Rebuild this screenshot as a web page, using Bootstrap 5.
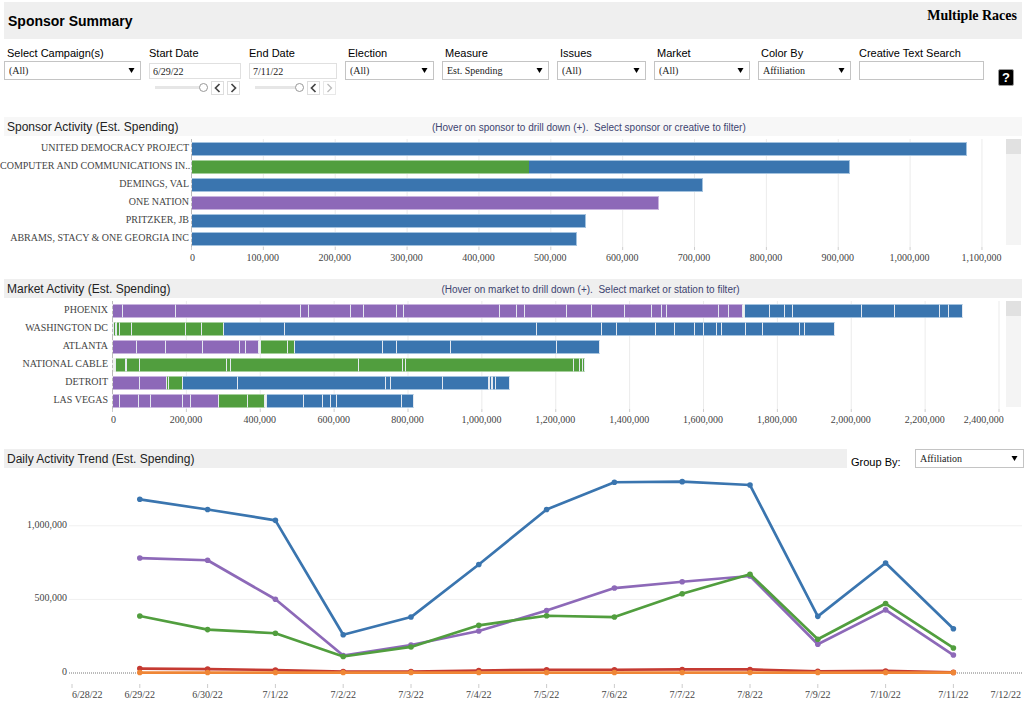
<!DOCTYPE html>
<html lang="en">
<head>
<meta charset="utf-8">
<meta name="viewport" content="width=device-width, initial-scale=1">
<title>Sponsor Summary</title>
<link href="https://cdn.jsdelivr.net/npm/bootstrap@5.3.0/dist/css/bootstrap.min.css" rel="stylesheet">
<style>
  :root { --sans: "Liberation Sans", Arial, sans-serif; --serif: "Liberation Serif", "Times New Roman", serif;
          --blue: #3a75af; --green: #519e3e; --purple: #8d69b8; }
  body { font-family: var(--sans); color: #000; background: #fff; padding: 2px 0 0 4px; overflow-x: hidden; }
  .page-head { background: #efefef; height: 37px; margin-right: 2px; padding: 0 5px 0 4px; }
  .page-head h1 { font-size: 14px; line-height: 16px; font-weight: 700; }
  .race-name { font: 700 14px/16px var(--serif); padding-top: 6px; }

  .filters { display: grid; gap: 8px; padding-top: 6px; height: 78px;
    grid-template-columns: 137fr 92fr 88fr 89fr 107fr 89fr 96fr 93fr 125fr 32px; }
  .filters > div { min-width: 0; }
  .filters label, .group-label { display: block; font-size: 11px; line-height: 16px; padding-left: 3px; white-space: nowrap; }
  .filters .flush { padding-left: 0; }
  .field { display: block; width: 100%; height: 19px; border: 1px solid #c4c4c4; border-radius: 0; background-color: #fff;
    font: 10px/15px var(--serif); color: #222; padding: 0 4px; appearance: none; }
  select.field { background-repeat: no-repeat; background-position: right 5px center; background-size: 7px 5px;
    background-image: url("data:image/svg+xml,%3Csvg xmlns='http://www.w3.org/2000/svg' viewBox='0 0 7 5'%3E%3Cpath d='M0.5 0h6L3.5 5z' fill='%23000'/%3E%3C/svg%3E"); }
  .field-date { height: 16px; margin-top: 2px; border-color: #e0e0e0; padding: 0 3px; }
  .stepper { padding: 2px 1px 0 6px; gap: 3px; }
  .stepper input { appearance: none; flex: 1 1 0; min-width: 0; height: 13px; margin: 0; background: transparent; }
  .stepper input::-webkit-slider-runnable-track { height: 3px; background: #e6e6e6; }
  .stepper input::-webkit-slider-thumb { appearance: none; width: 9px; height: 9px; margin-top: -3px; border-radius: 50%; border: 1px solid #999; background: #fff; }
  .stepper button { width: 13px; height: 14px; padding: 0; border: 1px solid #ddd; background: #fff; color: #444; line-height: 0; }
  .stepper button:disabled { color: #bbb; border-color: #e8e8e8; }
  .stepper svg { width: 9px; height: 10px; }
  .help-btn { width: 16px; height: 17px; margin: 24px 0 0 6px; padding: 0; border: 1px solid #999; border-radius: 2px; background: #000; color: #fff; font: 700 13px/15px var(--sans); }

  .section-head { height: 19px; background: #efefef; margin-right: 2px; padding-left: 3px; }
  .section-head.pale { background: #f7f7f7; }
  .section-head h2 { font-size: 12px; line-height: 21px; color: #222; flex: 20 1 0; white-space: nowrap; }
  .hint { font-size: 10px; line-height: 21px; color: #3d4470; white-space: pre; }
  .head-end { flex: 13 1 0; }
  .market-section { padding-top: 14px; }
  .trend-section { padding-top: 22px; }

  .chart { padding: 3px 3px 0 0; }
  .names { font: 10px/18px var(--serif); color: #444; text-align: right; padding-right: 4px; white-space: nowrap; }
  .names-wide { width: 191px; margin-left: -4px; padding-right: 2px; }
  .names-narrow { width: 108px; }
  .plot { flex: 1 1 0; min-width: 0; font: 10px/14px var(--serif); color: #444; }
  .rows, .ticks { background-image: linear-gradient(to right, #ebebeb 1px, transparent 1px); background-repeat: repeat-x; }
  .ticks { height: 3px; background-image: linear-gradient(to right, #ccc 1px, transparent 1px); }
  .bar-row { height: 18px; padding: 3px 0 1px; border-left: 1px dashed #bbb; display: flex; }
  .seg { flex: none; border-top: 1px solid; border-bottom: 1px solid; border-right: 1px solid; }
  .seg.b { background: var(--blue); border-color: #a3c2de; }
  .seg.g { background: var(--green); border-color: #a5cf9b; }
  .seg.p { background: var(--purple); border-color: #c8b4de; }
  .seg.n { background: #eef3ec; border-color: #eef3ec; }
  .joined .seg:not(:last-child) { border-right: 0; }
  .split .seg { border-right-color: #e4e9f0; }
  .axis { display: flex; width: 100%; padding-top: 1px; }
  .axis span { flex: none; text-align: center; white-space: nowrap; }
  .axis .zero { padding-left: 3px; }
  .axis-end { text-align: right; }
  .scroller { width: 15px; height: 106px; background: #f4f4f4; }
  .scroller div { height: 15px; background: #e1e1e1; }

  .group-label { line-height: 19px; padding: 4px 0 0 4px; width: 68px; }
  .group-field { width: 109px; height: 19px; }
  .trend { display: block; width: 100%; }
  .trend text { font: 10px var(--serif); fill: #444; }
</style>
</head>
<body>
<header class="page-head d-flex justify-content-between">
  <h1 class="m-0 align-self-center">Sponsor Summary</h1>
  <div class="race-name">Multiple Races</div>
</header>

<form class="filters">
  <div><label for="campaign">Select Campaign(s)</label><select id="campaign" class="field"><option>(All)</option></select></div>
  <div><label class="flush" for="start">Start Date</label><input id="start" class="field field-date" type="text" value="6/29/22">
    <div class="stepper d-flex"><input type="range" value="100" aria-label="Start date">
      <button type="button" aria-label="Previous start date"><svg viewBox="0 0 9 10"><path d="M6.500 1L2.500 5l4 4" fill="none" stroke="currentColor" stroke-width="1.700"/></svg></button>
      <button type="button" aria-label="Next start date"><svg viewBox="0 0 9 10"><path d="M2.500 1l4 4l-4 4" fill="none" stroke="currentColor" stroke-width="1.700"/></svg></button></div></div>
  <div><label class="flush" for="end">End Date</label><input id="end" class="field field-date" type="text" value="7/11/22">
    <div class="stepper d-flex"><input type="range" value="100" aria-label="End date">
      <button type="button" aria-label="Previous end date"><svg viewBox="0 0 9 10"><path d="M6.500 1L2.500 5l4 4" fill="none" stroke="currentColor" stroke-width="1.700"/></svg></button>
      <button type="button" aria-label="Next end date" disabled><svg viewBox="0 0 9 10"><path d="M2.500 1l4 4l-4 4" fill="none" stroke="currentColor" stroke-width="1.300"/></svg></button></div></div>
  <div><label for="election">Election</label><select id="election" class="field"><option>(All)</option></select></div>
  <div><label for="measure">Measure</label><select id="measure" class="field"><option>Est. Spending</option></select></div>
  <div><label for="issues">Issues</label><select id="issues" class="field"><option>(All)</option></select></div>
  <div><label for="market">Market</label><select id="market" class="field"><option>(All)</option></select></div>
  <div><label for="color">Color By</label><select id="color" class="field"><option>Affiliation</option></select></div>
  <div><label class="flush" for="search">Creative Text Search</label><input id="search" class="field" type="text"></div>
  <div><button type="button" class="help-btn" aria-label="Help">?</button></div>
</form>

<section>
  <div class="section-head pale d-flex">
    <h2 class="m-0">Sponsor Activity (Est. Spending)</h2>
    <div class="hint">(Hover on sponsor to drill down (+).  Select sponsor or creative to filter)</div>
    <div class="head-end"></div>
  </div>
  <div class="chart d-flex">
    <div class="names names-wide">
      <div>UNITED DEMOCRACY PROJECT</div><div>COMPUTER AND COMMUNICATIONS IN..</div><div>DEMINGS, VAL</div>
      <div>ONE NATION</div><div>PRITZKER, JB</div><div>ABRAMS, STACY &amp; ONE GEORGIA INC</div>
    </div>
    <div class="plot joined" id="sponsors"></div>
    <div class="scroller"><div></div></div>
  </div>
</section>

<section class="market-section">
  <div class="section-head d-flex">
    <h2 class="m-0">Market Activity (Est. Spending)</h2>
    <div class="hint">(Hover on market to drill down (+).  Select market or station to filter)</div>
    <div class="head-end"></div>
  </div>
  <div class="chart d-flex">
    <div class="names names-narrow">
      <div>PHOENIX</div><div>WASHINGTON DC</div><div>ATLANTA</div><div>NATIONAL CABLE</div><div>DETROIT</div><div>LAS VEGAS</div>
    </div>
    <div class="plot split" id="markets"></div>
    <div class="scroller"><div></div></div>
  </div>
</section>

<section class="trend-section">
  <div class="d-flex">
    <div class="section-head flex-fill me-0"><h2 class="m-0">Daily Activity Trend (Est. Spending)</h2></div>
    <label class="group-label" for="group">Group By:</label>
    <select id="group" class="field group-field"><option>Affiliation</option></select>
  </div>
  <svg class="trend" id="trend" viewBox="4 4 1020 232" role="img" aria-label="Daily spending by affiliation"></svg>
</section>

<script>
// Each row is a list of [colour key, cumulative ends in thousands of dollars].
const sponsors = [
  [['b', 1080]], [['g', 469], ['b', 917]], [['b', 712]], [['p', 651]], [['b', 549]], [['b', 537]]
];
const markets = [
  [['p', 26,172,509,531,646,679,770,789,1048,1094,1116,1231,1297,1387,1460,1487,1502,1643,1670,1708], ['n', 1714], ['b', 1782,1821,1844,2031,2121,2243,2265,2304]],
  [['n', 3], ['g', 8], ['n', 11], ['g', 19,51,199,241,300], ['b', 467,1148,1325,1365,1473,1522,1578,1601,1636,1651,1717,1763,1861,1875,1957]],
  [['p', 66,143,244,343,360,395], ['n', 400], ['g', 475,494], ['b', 732,770,915,1204,1320]],
  [['n', 9], ['g', 34,39,72,309,321,666,787,794,1250,1267,1274,1278]],
  [['p', 72,146], ['g', 152,190], ['b', 338,739,753,895,1018], ['n', 1022], ['b', 1027,1031,1037,1076]],
  [['p', 18,70,104,190,211,287], ['g', 365,412], ['n', 417], ['b', 519,570,592,607,784,815]]
];

function drawBars(id, rows, max, step) {
  const pct = v => v / max * 100 + '%';
  // A background percentage size makes the grid repeat at exactly one axis step.
  const grid = `style="background-size:${pct(step)} 100%"`;
  const body = rows.map(groups => {
    let from = 0, html = '';
    for (const [key, ...ends] of groups) for (const end of ends) {
      html += `<div class="seg ${key}" style="width:${pct(end - from)}"></div>`;
      from = end;
    }
    return `<div class="bar-row">${html}</div>`;
  }).join('');
  // Labels are centred on their tick; one that would pass the plot's edge is aligned to it.
  let axis = '';
  for (let v = 0; v <= max; v += step) {
    const room = max - (v - step / 2);
    const edge = room < step * .7;
    axis += `<span class="${edge ? 'axis-end' : v ? '' : 'zero'}" style="width:${pct(edge ? room : step)}">${(v * 1000).toLocaleString('en-US')}</span>`;
  }
  document.getElementById(id).innerHTML =
    `<div class="rows" ${grid}>${body}</div><div class="ticks" ${grid}></div><div class="axis" style="margin-left:-${pct(step / 2)}">${axis}</div>`;
}
drawBars('sponsors', sponsors, 1134, 100);
drawBars('markets', markets, 2420, 200);

const days = ['6/28/22','6/29/22','6/30/22','7/1/22','7/2/22','7/3/22','7/4/22','7/5/22','7/6/22','7/7/22','7/8/22','7/9/22','7/10/22','7/11/22','7/12/22'];
const series = [
  ['#3a75af', [1180,1111,1037,260,380,737,1111,1296,1300,1277,385,747,301]],
  ['#8d69b8', [781,766,501,119,190,285,425,577,620,659,195,429,122]],
  ['#519e3e', [387,295,270,112,177,324,389,380,538,671,229,472,170]],
  ['#c53a32', [30,27,20,10,10,17,22,22,24,24,11,14,4]],
  ['#ef8636', [3,3,3,3,3,3,3,3,3,3,3,3,3]]
];
const X = i => 72 + i * 67.8, Y = v => 205 - v * .1472;
let svg = '';
for (const v of [1000, 500, 0]) {
  svg += `<line x1="69" x2="1022" y1="${Y(v)}" y2="${Y(v)}" ${v ? 'stroke="#f0f0f0"' : 'stroke="#777" stroke-dasharray="1 1"'}/>`
       + `<text x="67" y="${Y(v) + 2}" text-anchor="end">${(v * 1000).toLocaleString('en-US')}</text>`;
}
days.forEach((d, i) => {
  const last = i === days.length - 1;
  if (!last) svg += `<line x1="${X(i)}" x2="${X(i)}" y1="216" y2="220" stroke="#ccc"/>`;
  svg += `<text x="${last ? 1021 : X(i)}" y="230" text-anchor="${last ? 'end' : i ? 'middle' : 'start'}">${d}</text>`;
});
for (const [color, vals] of series) {
  const pts = vals.map((v, i) => [X(i + 1), Y(v)]);
  svg += `<polyline points="${pts.join(' ')}" fill="none" stroke="${color}" stroke-width="2.700" stroke-linejoin="round"/>`
       + pts.map(p => `<circle cx="${p[0]}" cy="${p[1]}" r="2.800" fill="${color}"/>`).join('');
}
document.getElementById('trend').innerHTML = svg;
</script>
<script src="https://cdn.jsdelivr.net/npm/bootstrap@5.3.0/dist/js/bootstrap.bundle.min.js"></script>
</body>
</html>
